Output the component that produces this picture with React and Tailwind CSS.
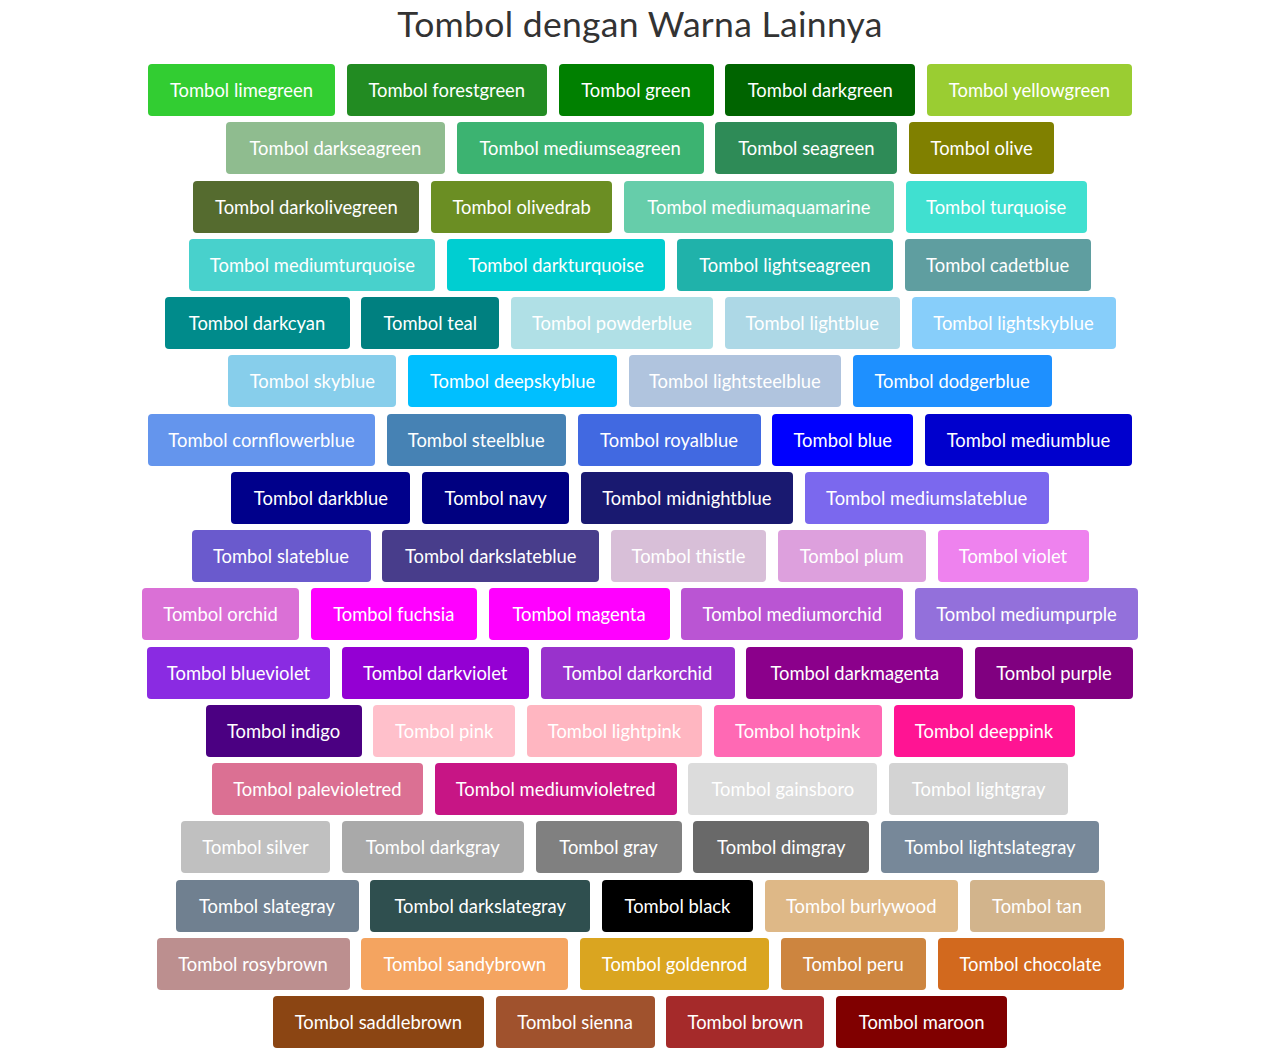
import React from 'react'

const rows = [
    [
        { name: 'limegreen', bg: 'bg-[#32cd32]', w: 'w-[187px]' },
        { name: 'forestgreen', bg: 'bg-[#228b22]', w: 'w-[200px]' },
        { name: 'green', bg: 'bg-[#008000]', w: 'w-[155px]' },
        { name: 'darkgreen', bg: 'bg-[#006400]', w: 'w-[190px]' },
        { name: 'yellowgreen', bg: 'bg-[#9acd32]', w: 'w-[205px]' },
    ],
    [
        { name: 'darkseagreen', bg: 'bg-[#8fbc8f]', w: 'w-[219px]' },
        { name: 'mediumseagreen', bg: 'bg-[#3cb371]', w: 'w-[247px]' },
        { name: 'seagreen', bg: 'bg-[#2e8b57]', w: 'w-[182px]' },
        { name: 'olive', bg: 'bg-[#808000]', w: 'w-[145px]' },
    ],
    [
        { name: 'darkolivegreen', bg: 'bg-[#556b2f]', w: 'w-[226px]' },
        { name: 'olivedrab', bg: 'bg-[#6b8e23]', w: 'w-[181px]' },
        { name: 'mediumaquamarine', bg: 'bg-[#66cdaa]', w: 'w-[270px]' },
        { name: 'turquoise', bg: 'bg-[#40e0d0]', w: 'w-[181px]' },
    ],
    [
        { name: 'mediumturquoise', bg: 'bg-[#48d1cc]', w: 'w-[246px]' },
        { name: 'darkturquoise', bg: 'bg-[#00ced1]', w: 'w-[218px]' },
        { name: 'lightseagreen', bg: 'bg-[#20b2aa]', w: 'w-[216px]' },
        { name: 'cadetblue', bg: 'bg-[#5f9ea0]', w: 'w-[186px]' },
    ],
    [
        { name: 'darkcyan', bg: 'bg-[#008b8b]', w: 'w-[185px]' },
        { name: 'teal', bg: 'bg-[#008080]', w: 'w-[138px]' },
        { name: 'powderblue', bg: 'bg-[#b0e0e6]', w: 'w-[202px]' },
        { name: 'lightblue', bg: 'bg-[#add8e6]', w: 'w-[175px]' },
        { name: 'lightskyblue', bg: 'bg-[#87cefa]', w: 'w-[204px]' },
    ],
    [
        { name: 'skyblue', bg: 'bg-[#87ceeb]', w: 'w-[168px]' },
        { name: 'deepskyblue', bg: 'bg-[#00bfff]', w: 'w-[209px]' },
        { name: 'lightsteelblue', bg: 'bg-[#b0c4de]', w: 'w-[212px]' },
        { name: 'dodgerblue', bg: 'bg-[#1e90ff]', w: 'w-[199px]' },
    ],
    [
        { name: 'cornflowerblue', bg: 'bg-[#6495ed]', w: 'w-[227px]' },
        { name: 'steelblue', bg: 'bg-[#4682b4]', w: 'w-[179px]' },
        { name: 'royalblue', bg: 'bg-[#4169e1]', w: 'w-[183px]' },
        { name: 'blue', bg: 'bg-[#0000ff]', w: 'w-[141px]' },
        { name: 'mediumblue', bg: 'bg-[#0000cd]', w: 'w-[207px]' },
    ],
    [
        { name: 'darkblue', bg: 'bg-[#00008b]', w: 'w-[179px]' },
        { name: 'navy', bg: 'bg-[#000080]', w: 'w-[147px]' },
        { name: 'midnightblue', bg: 'bg-[#191970]', w: 'w-[212px]' },
        { name: 'mediumslateblue', bg: 'bg-[#7b68ee]', w: 'w-[244px]' },
    ],
    [
        { name: 'slateblue', bg: 'bg-[#6a5acd]', w: 'w-[179px]' },
        { name: 'darkslateblue', bg: 'bg-[#483d8b]', w: 'w-[217px]' },
        { name: 'thistle', bg: 'bg-[#d8bfd8]', w: 'w-[155px]' },
        { name: 'plum', bg: 'bg-[#dda0dd]', w: 'w-[148px]' },
        { name: 'violet', bg: 'bg-[#ee82ee]', w: 'w-[151px]' },
    ],
    [
        { name: 'orchid', bg: 'bg-[#da70d6]', w: 'w-[157px]' },
        { name: 'fuchsia', bg: 'bg-[#ff00ff]', w: 'w-[166px]' },
        { name: 'magenta', bg: 'bg-[#ff00ff]', w: 'w-[181px]' },
        { name: 'mediumorchid', bg: 'bg-[#ba55d3]', w: 'w-[222px]' },
        { name: 'mediumpurple', bg: 'bg-[#9370db]', w: 'w-[223px]' },
    ],
    [
        { name: 'blueviolet', bg: 'bg-[#8a2be2]', w: 'w-[183px]' },
        { name: 'darkviolet', bg: 'bg-[#9400d3]', w: 'w-[187px]' },
        { name: 'darkorchid', bg: 'bg-[#9932cc]', w: 'w-[194px]' },
        { name: 'darkmagenta', bg: 'bg-[#8b008b]', w: 'w-[217px]' },
        { name: 'purple', bg: 'bg-[#800080]', w: 'w-[158px]' },
    ],
    [
        { name: 'indigo', bg: 'bg-[#4b0082]', w: 'w-[156px]' },
        { name: 'pink', bg: 'bg-[#ffc0cb]', w: 'w-[142px]' },
        { name: 'lightpink', bg: 'bg-[#ffb6c1]', w: 'w-[175px]' },
        { name: 'hotpink', bg: 'bg-[#ff69b4]', w: 'w-[168px]' },
        { name: 'deeppink', bg: 'bg-[#ff1493]', w: 'w-[181px]' },
    ],
    [
        { name: 'palevioletred', bg: 'bg-[#db7093]', w: 'w-[211px]' },
        { name: 'mediumvioletred', bg: 'bg-[#c71585]', w: 'w-[242px]' },
        { name: 'gainsboro', bg: 'bg-[#dcdcdc]', w: 'w-[189px]' },
        { name: 'lightgray', bg: 'bg-[#d3d3d3]', w: 'w-[179px]' },
    ],
    [
        { name: 'silver', bg: 'bg-[#c0c0c0]', w: 'w-[149px]' },
        { name: 'darkgray', bg: 'bg-[#a9a9a9]', w: 'w-[182px]' },
        { name: 'gray', bg: 'bg-[#808080]', w: 'w-[146px]' },
        { name: 'dimgray', bg: 'bg-[#696969]', w: 'w-[176px]' },
        { name: 'lightslategray', bg: 'bg-[#778899]', w: 'w-[218px]' },
    ],
    [
        { name: 'slategray', bg: 'bg-[#708090]', w: 'w-[183px]' },
        { name: 'darkslategray', bg: 'bg-[#2f4f4f]', w: 'w-[220px]' },
        { name: 'black', bg: 'bg-[#000000]', w: 'w-[151px]' },
        { name: 'burlywood', bg: 'bg-[#deb887]', w: 'w-[193px]' },
        { name: 'tan', bg: 'bg-[#d2b48c]', w: 'w-[135px]' },
    ],
    [
        { name: 'rosybrown', bg: 'bg-[#bc8f8f]', w: 'w-[193px]' },
        { name: 'sandybrown', bg: 'bg-[#f4a460]', w: 'w-[207px]' },
        { name: 'goldenrod', bg: 'bg-[#daa520]', w: 'w-[189px]' },
        { name: 'peru', bg: 'bg-[#cd853f]', w: 'w-[145px]' },
        { name: 'chocolate', bg: 'bg-[#d2691e]', w: 'w-[186px]' },
    ],
    [
        { name: 'saddlebrown', bg: 'bg-[#8b4513]', w: 'w-[211px]' },
        { name: 'sienna', bg: 'bg-[#a0522d]', w: 'w-[159px]' },
        { name: 'brown', bg: 'bg-[#a52a2a]', w: 'w-[158px]' },
        { name: 'maroon', bg: 'bg-[#800000]', w: 'w-[171px]' },
    ],
]

const ColorButton = ({ name, bg, w }) => (
    <button
        type="button"
        className={`${bg} ${w} h-[52px] shrink-0 rounded-[4px] pt-[2px] text-white text-[18.4px] text-center whitespace-nowrap`}
    >
        Tombol {name}
    </button>
)

export default function App() {
    return (
        <div className="min-h-screen bg-white pl-[17px] font-['Lato','Noto_Sans',sans-serif]">
            <h1 className="text-center text-[35.5px] leading-[48px] text-[#333333] tracking-[0.3px]">
                Tombol dengan Warna Lainnya
            </h1>
            <div className="flex flex-col items-center gap-y-[6.25px] pt-[16px]">
                {rows.map((row, i) => (
                    <div key={i} className="flex justify-center gap-x-[11.75px]">
                        {row.map((b) => (
                            <ColorButton key={b.name} {...b} />
                        ))}
                    </div>
                ))}
            </div>
        </div>
    )
}
